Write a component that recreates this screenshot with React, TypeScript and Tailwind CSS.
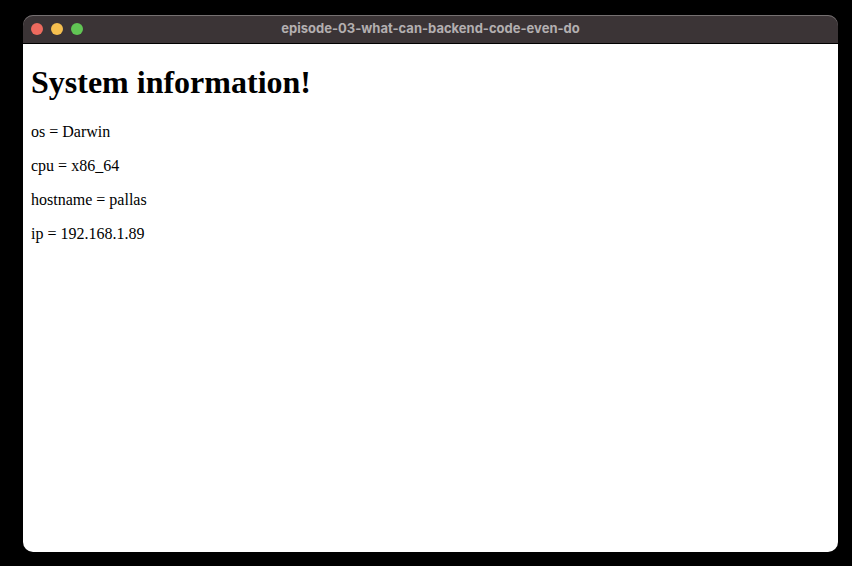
export default function App() {
  return (
    <div className="flex min-h-screen flex-col bg-black pt-[15px] pr-3.5 pb-3.5 pl-[23px]">
      <main className="flex grow flex-col">
        <header className="grid h-[29px] grid-cols-[1fr_auto_1fr] items-center rounded-t-[10px] border-b border-black bg-[#3b3436] px-2 shadow-[inset_0_1px_0_#757071]">
          <div className="flex gap-2">
            <button type="button" aria-label="Close" className="size-3 rounded-full bg-[#ed6a5e]" />
            <button type="button" aria-label="Minimize" className="size-3 rounded-full bg-[#f5bf4f]" />
            <button type="button" aria-label="Zoom" className="size-3 rounded-full bg-[#61c554]" />
          </div>
          <span className="pb-0.5 font-[Inter,sans-serif] text-[13px] leading-4 font-bold text-[#b3afb0]">
            episode-03-what-can-backend-code-even-do
          </span>
        </header>
        <section className="flex grow flex-col gap-4 rounded-b-[10px] bg-white px-2 pt-5 font-['Liberation_Serif',serif] text-base leading-[18px] text-black">
          <h1 className="mb-[7px] text-[32px] leading-9 font-bold">System information!</h1>
          <p>os = Darwin</p>
          <p>cpu = x86_64</p>
          <p>hostname = pallas</p>
          <p>ip = 192.168.1.89</p>
        </section>
      </main>
    </div>
  );
}
